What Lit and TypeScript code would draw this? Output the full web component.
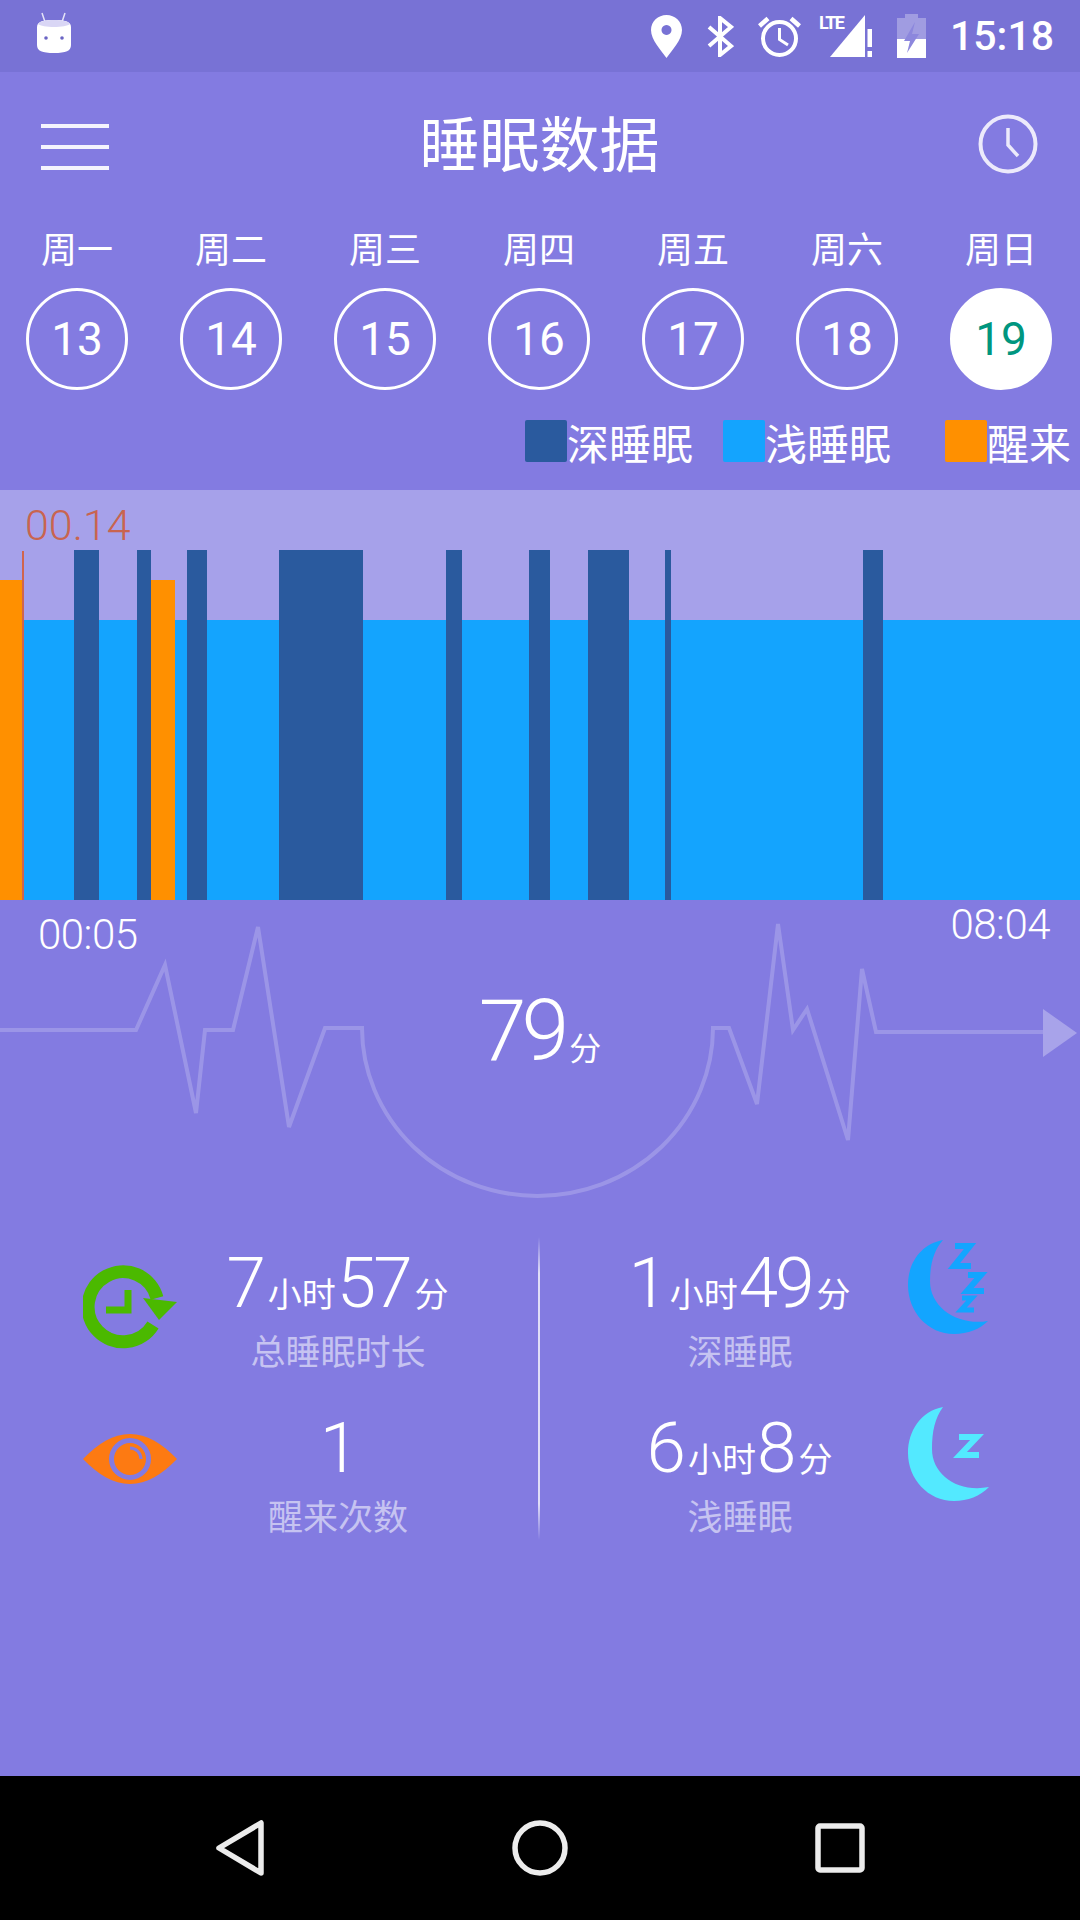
import { LitElement, html, css, svg } from 'lit';
import { customElement } from 'lit/decorators.js';

const days = [
  ['周一', 13], ['周二', 14], ['周三', 15], ['周四', 16],
  ['周五', 17], ['周六', 18], ['周日', 19],
];

const legend = [
  ['深睡眠', 'deep'],
  ['浅睡眠', 'light'],
  ['醒来', 'wake'],
];

// [type, width in px], left to right
const segments: [string, number][] = [
  ['wake', 23], ['light', 51], ['deep', 25], ['light', 38], ['deep', 14],
  ['wake', 24], ['light', 12], ['deep', 20], ['light', 72], ['deep', 84],
  ['light', 83], ['deep', 16], ['light', 67], ['deep', 21], ['light', 38],
  ['deep', 41], ['light', 36], ['deep', 6], ['light', 192], ['deep', 20],
  ['light', 197],
];

const botIcon = svg`<svg class="bot" width="36" height="42" viewBox="0 0 36 42">
  <path d="M6 1 L9 10 M29 1 L26 10" stroke="#fff" stroke-width="1.500" opacity=".8" fill="none"/>
  <path d="M1 15 C1 9 8 8 18 8 C28 8 35 9 35 15 V33 C35 39 30 41 18 41 C6 41 1 39 1 33Z" fill="#fff"/>
  <path d="M2 12 C4 9 10 8 18 8 C26 8 32 9 34 12 C30 16 6 16 2 12Z" fill="#d9d6f5"/>
  <circle cx="10" cy="26" r="1.800" fill="#6a64c4"/>
  <circle cx="26" cy="26" r="1.800" fill="#6a64c4"/>
</svg>`;

const pinIcon = svg`<svg width="31" height="43" viewBox="0 0 31 43">
  <path fill-rule="evenodd" fill="#fff" d="M15.500 0 C7 0 0 6.500 0 15 C0 25 10 35 15.500 43 C21 35 31 25 31 15 C31 6.500 24 0 15.500 0Z M15.500 10 a5 5 0 1 0 .01 0Z"/>
</svg>`;

const btIcon = svg`<svg width="28" height="41" viewBox="0 0 28 41">
  <path d="M3 11 L25 30 L14 39 V2 L25 11 L3 30" fill="none" stroke="#fff" stroke-width="4"/>
</svg>`;

const alarmIcon = svg`<svg class="tight" width="43" height="41" viewBox="0 0 43 41">
  <circle cx="21.500" cy="22.500" r="16.500" fill="none" stroke="#fff" stroke-width="4"/>
  <path d="M21.500 12 V23.500 L30 29" fill="none" stroke="#fff" stroke-width="3"/>
  <path d="M1.500 10 L10 2.500 M41.500 10 L33 2.500" fill="none" stroke="#fff" stroke-width="4.500"/>
</svg>`;

const signalIcon = svg`<svg width="54" height="43" viewBox="0 0 54 43">
  <path d="M11 42 L46 0 V42Z" fill="#fff"/>
  <path d="M47 14 H54 V42 H47Z" fill="#7872d5"/>
  <path d="M48.500 14 H53 V32 H48.500Z M48.500 36 H53 V42 H48.500Z" fill="#fff"/>
</svg>`;

const batteryIcon = svg`<svg width="29" height="44" viewBox="0 0 29 44">
  <path d="M8 0 H21 V4 H29 V44 H0 V4 H8Z" fill="#fff" opacity=".3"/>
  <path d="M0 25 H29 V44 H0Z" fill="#fff"/>
  <path d="M18 8 L7 27 H13 L10 39 L22 20 H15Z" fill="#8c87dd"/>
</svg>`;

const menuIcon = svg`<svg class="menu" width="68" height="46" viewBox="0 0 68 46">
  <path d="M0 2 H68 M0 23 H68 M0 44 H68" stroke="#f4f3fd" stroke-width="4" fill="none"/>
</svg>`;

const clockIcon = svg`<svg width="60" height="60" viewBox="0 0 60 60">
  <circle cx="30" cy="30" r="27.500" fill="none" stroke="#eceafb" stroke-width="4"/>
  <path d="M30 14 V31 L40 42" fill="none" stroke="#eceafb" stroke-width="3.500"/>
</svg>`;

const waveIcon = svg`<svg class="wave" width="1080" height="337" viewBox="0 0 1080 337">
  <path fill="none" stroke="#fff" stroke-opacity=".2" stroke-width="4"
    d="M0 130 H136 L165 65 L196 213 L205 130 H233 L258 27 L289 227 L325 128 H362
       A175.500 168 0 0 0 713 128 H729 L757 204 L778 24 L793 130 L807 109 L848 240 L862 69 L876 132 H1043"/>
  <path d="M1043 109 L1077 133 L1043 157Z" fill="#fff" fill-opacity=".3"/>
</svg>`;

const greenClock = svg`<svg width="94" height="84" viewBox="0 0 94 84">
  <path d="M70 60 A35 35 0 1 1 74 33" fill="none" stroke="#4bb900" stroke-width="13"/>
  <path d="M60 33 L94 37 L76 55Z" fill="#4bb900"/>
  <path d="M45 25 V45 H23" fill="none" stroke="#4bb900" stroke-width="7"/>
</svg>`;

const eyeIcon = svg`<svg width="94" height="50" viewBox="0 0 94 50">
  <path d="M0 25 C16 9 30 0 47 0 C64 0 78 9 94 25 C78 41 64 50 47 50 C30 50 16 41 0 25Z" fill="#fd7a12"/>
  <circle cx="47" cy="25" r="18.500" fill="#fd7a12" stroke="#837be1" stroke-width="5"/>
  <path d="M47 14 A11 11 0 0 1 58 25" fill="none" stroke="#837be1" stroke-width="3"/>
</svg>`;

const deepMoon = svg`<svg width="80" height="96" viewBox="0 0 80 96">
  <path d="M35 2 C13 6 0 25 0 47 C0 74 20 96 46 96 C60 96 72 91 80 83 C50 88 22 70 22 43 C22 26 26 12 35 2Z" fill="#13a5ff"/>
  <path d="M47 8 H62 L46 28 H63" fill="none" stroke="#13a5ff" stroke-width="6"/>
  <path d="M60 37 H73 L59 53 H76" fill="none" stroke="#13a5ff" stroke-width="6"/>
  <path d="M54 60 H64 L53 72 H66" fill="none" stroke="#13a5ff" stroke-width="5"/>
</svg>`;

const lightMoon = svg`<svg width="81" height="94" viewBox="0 0 81 94">
  <path d="M35 0 C13 4 0 24 0 46 C0 72 20 94 46 94 C60 94 72 89 81 80 C50 86 24 68 24 42 C24 24 27 11 35 0Z" fill="#53e9ff"/>
  <path d="M51 30 H69 L52 48 H71" fill="none" stroke="#53e9ff" stroke-width="6"/>
</svg>`;

@customElement('app-root')
export class AppRoot extends LitElement {
  static styles = css`
    :host {
      display: block;
      width: 1080px;
      height: 1920px;
      background: #837be1;
      color: #fff;
      font-family: Roboto, 'Noto Sans CJK SC', sans-serif;
    }
    .page {
      display: flex;
      flex-direction: column;
      height: 100%;
    }
    svg {
      display: block;
    }

    .status {
      height: 72px;
      flex: none;
      background: #7872d5;
      display: flex;
      align-items: center;
      padding: 0 26px 0 36px;
    }
    .bot {
      margin-bottom: 6px;
    }
    .status-icons {
      margin-left: auto;
      display: flex;
      align-items: center;
    }
    .status-icons svg {
      margin-right: 24px;
    }
    .status-icons svg.tight {
      margin-right: 18px;
    }
    .signal {
      position: relative;
    }
    .lte {
      position: absolute;
      left: 0;
      top: -1px;
      font-size: 18px;
      line-height: 18px;
      font-weight: 700;
      letter-spacing: -1.500px;
    }
    .clock-text {
      font-size: 41px;
      font-weight: 500;
      line-height: 72px;
    }

    .header {
      height: 144px;
      flex: none;
      display: grid;
      grid-template-columns: 1fr auto 1fr;
      align-items: center;
      padding: 0 42px 0 41px;
    }
    .header .right {
      justify-self: end;
    }
    .menu {
      margin-top: 6px;
    }
    .title {
      font-size: 60px;
      line-height: 72px;
      margin-top: 6px;
    }

    .week {
      display: grid;
      grid-template-columns: repeat(7, 154px);
    }
    .day {
      display: flex;
      flex-direction: column;
      align-items: center;
    }
    .day-name {
      font-size: 36px;
      line-height: 50px;
      height: 50px;
      margin-top: 10px;
      margin-bottom: 12px;
    }
    .day-num {
      width: 102px;
      height: 102px;
      box-sizing: border-box;
      border: 3px solid #fff;
      border-radius: 50%;
      display: flex;
      align-items: center;
      justify-content: center;
      font-size: 46px;
    }
    .day-num.on {
      background: #fff;
      color: #00967f;
    }

    .legend {
      height: 100px;
      flex: none;
      box-sizing: border-box;
      padding-top: 30px;
      display: flex;
      justify-content: flex-end;
      padding-right: 9px;
    }
    .legend-item {
      display: flex;
      align-items: center;
      height: 42px;
      margin-left: 30px;
      font-size: 42px;
    }
    .legend-item + .legend-item + .legend-item {
      margin-left: 54px;
    }
    .swatch {
      width: 42px;
      height: 42px;
      border-radius: 2px;
    }
    .deep { background: #2a5a9e; }
    .light { background: #14a4fe; }
    .wake { background: #ff9000; }

    .chart {
      position: relative;
      height: 410px;
      flex: none;
      background: #a6a1ea;
      display: flex;
      align-items: flex-end;
    }
    .seg.deep { height: 350px; }
    .seg.light { height: 280px; }
    .seg.wake { height: 320px; }
    .chart-label {
      position: absolute;
      left: 25px;
      top: 10px;
      font-size: 43px;
      line-height: 50px;
      font-weight: 300;
      color: #c9644f;
    }
    .chart-line {
      position: absolute;
      left: 22px;
      top: 61px;
      bottom: 0;
      width: 2px;
      background: #d0654d;
    }

    .score {
      position: relative;
      height: 337px;
      flex: none;
    }
    .wave {
      position: absolute;
      left: 0;
      top: 0;
    }
    .times {
      position: relative;
      display: flex;
      justify-content: space-between;
      align-items: flex-start;
      padding: 0 30px 0 38px;
      height: 91px;
      font-size: 42px;
      line-height: 50px;
      font-weight: 300;
      letter-spacing: -0.500px;
    }
    .times .start {
      margin-top: 10px;
    }
    .score-value {
      position: relative;
      text-align: center;
      line-height: 80px;
    }
    .score-value .num {
      font-size: 86px;
      font-weight: 300;
      letter-spacing: -5px;
    }
    .score-value .unit {
      font-size: 32px;
      margin-left: 5px;
    }

    .stats {
      position: relative;
      height: 303px;
      flex: none;
      display: grid;
      grid-template-columns: 540px 540px;
      grid-template-rows: 165px 138px;
    }
    .divider {
      position: absolute;
      left: 538px;
      top: 0;
      bottom: 0;
      width: 2px;
      background: linear-gradient(transparent, rgba(255, 255, 255, 0.75) 12%, rgba(255, 255, 255, 0.75) 88%, transparent);
    }
    .cell {
      display: flex;
      align-items: flex-start;
    }
    .cell.left {
      padding-left: 83px;
    }
    .cell.right {
      padding-left: 60px;
    }
    .cell.left .text {
      width: 322px;
    }
    .cell.right .text {
      width: 280px;
      margin-right: 28px;
    }
    .text {
      text-align: center;
      padding-top: 8px;
    }
    .value {
      height: 76px;
      line-height: 76px;
      white-space: nowrap;
    }
    .value .num {
      font-size: 71px;
      font-weight: 300;
      letter-spacing: -3px;
    }
    .value .unit {
      font-size: 34px;
      margin: 0 1px 0 5px;
    }
    .caption {
      margin-top: 10px;
      font-size: 35px;
      line-height: 46px;
      color: #c6c3f1;
    }
    .icon-total { margin-top: 28px; }
    .icon-eye { margin-top: 32px; }
    .icon-deep { margin-top: 1px; }
    .icon-light { margin-top: 5px; }

    .spacer {
      flex: 1;
    }
    .nav {
      height: 144px;
      flex: none;
      background: #000;
      display: grid;
      grid-template-columns: 480px 120px 480px;
      align-items: center;
    }
    .nav .back {
      justify-self: end;
      margin-right: 216px;
    }
    .nav .home {
      justify-self: center;
    }
    .nav .recent {
      justify-self: start;
      margin-left: 215px;
    }
  `;

  private renderValue(parts: [string, string][]) {
    return html`<div class="value">${parts.map(
      ([kind, text]) => html`<span class=${kind}>${text}</span>`
    )}</div>`;
  }

  render() {
    return html`
      <div class="page">
        <div class="status">
          ${botIcon}
          <div class="status-icons">
            ${pinIcon}${btIcon}${alarmIcon}
            <div class="signal">${signalIcon}<span class="lte">LTE</span></div>
            ${batteryIcon}
            <span class="clock-text">15:18</span>
          </div>
        </div>

        <div class="header">
          <div>${menuIcon}</div>
          <div class="title">睡眠数据</div>
          <div class="right">${clockIcon}</div>
        </div>

        <div class="week">
          ${days.map(([name, num]) => html`
            <div class="day">
              <div class="day-name">${name}</div>
              <div class="day-num ${num === 19 ? 'on' : ''}">${num}</div>
            </div>
          `)}
        </div>

        <div class="legend">
          ${legend.map(([label, type]) => html`
            <div class="legend-item">
              <div class="swatch ${type}"></div>${label}
            </div>
          `)}
        </div>

        <div class="chart">
          ${segments.map(([type, w]) => html`
            <div class="seg ${type}" style="width:${w}px"></div>
          `)}
          <div class="chart-line"></div>
          <div class="chart-label">00.14</div>
        </div>

        <div class="score">
          ${waveIcon}
          <div class="times">
            <span class="start">00:05</span>
            <span>08:04</span>
          </div>
          <div class="score-value"><span class="num">79</span><span class="unit">分</span></div>
        </div>

        <div class="stats">
          <div class="cell left">
            <div class="icon-total">${greenClock}</div>
            <div class="text">
              ${this.renderValue([['num', '7'], ['unit', '小时'], ['num', '57'], ['unit', '分']])}
              <div class="caption">总睡眠时长</div>
            </div>
          </div>
          <div class="cell right">
            <div class="text">
              ${this.renderValue([['num', '1'], ['unit', '小时'], ['num', '49'], ['unit', '分']])}
              <div class="caption">深睡眠</div>
            </div>
            <div class="icon-deep">${deepMoon}</div>
          </div>
          <div class="cell left">
            <div class="icon-eye">${eyeIcon}</div>
            <div class="text">
              ${this.renderValue([['num', '1']])}
              <div class="caption">醒来次数</div>
            </div>
          </div>
          <div class="cell right">
            <div class="text">
              ${this.renderValue([['num', '6'], ['unit', '小时'], ['num', '8'], ['unit', '分']])}
              <div class="caption">浅睡眠</div>
            </div>
            <div class="icon-light">${lightMoon}</div>
          </div>
          <div class="divider"></div>
        </div>

        <div class="spacer"></div>

        <div class="nav">
          <svg class="back" width="48" height="56" viewBox="0 0 48 56">
            <path d="M45 3 V53 L3 28Z" fill="none" stroke="#ececec" stroke-width="5.500" stroke-linejoin="round"/>
          </svg>
          <svg class="home" width="56" height="56" viewBox="0 0 56 56">
            <circle cx="28" cy="28" r="25" fill="none" stroke="#ececec" stroke-width="5.500"/>
          </svg>
          <svg class="recent" width="50" height="50" viewBox="0 0 50 50">
            <rect x="3" y="3" width="44" height="44" rx="2" fill="none" stroke="#ececec" stroke-width="5.500"/>
          </svg>
        </div>
      </div>
    `;
  }
}
